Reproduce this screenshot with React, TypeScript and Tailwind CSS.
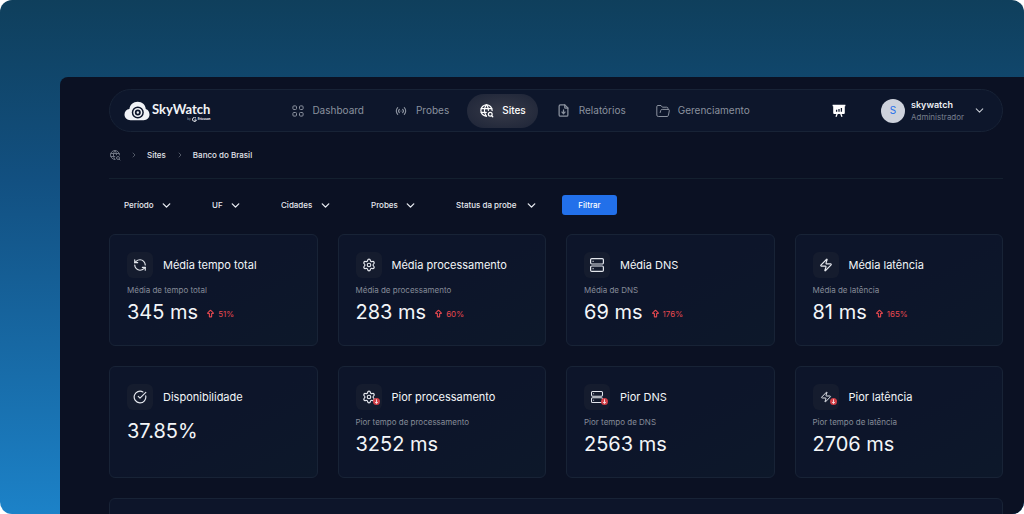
import type { ReactNode } from 'react'
import { ChevronDown, ChevronRight, CircleCheckBig, RefreshCcw, Settings, Zap } from 'lucide-react'
import { TbAccessPoint, TbArrowBigUp, TbFileDownload, TbWorldSearch } from 'react-icons/tb'

interface Metric {
  title: string
  subtitle?: string
  value: string
  change?: string
  worst?: boolean
  icon: ReactNode
}

const METRICS: Metric[] = [
  { title: 'Média tempo total', subtitle: 'Média de tempo total', value: '345 ms', change: '51%', icon: <RefreshCcw size={14} /> },
  { title: 'Média processamento', subtitle: 'Média de processamento', value: '283 ms', change: '60%', icon: <Settings size={14} /> },
  { title: 'Média DNS', subtitle: 'Média de DNS', value: '69 ms', change: '176%', icon: <ServerIcon size={14} /> },
  { title: 'Média latência', subtitle: 'Média de latência', value: '81 ms', change: '165%', icon: <Zap size={14} /> },
  { title: 'Disponibilidade', value: '37.85%', icon: <CircleCheckBig size={14} /> },
  { title: 'Pior processamento', subtitle: 'Pior tempo de processamento', value: '3252 ms', worst: true, icon: <Settings size={14} /> },
  { title: 'Pior DNS', subtitle: 'Pior tempo de DNS', value: '2563 ms', worst: true, icon: <ServerIcon size={12} /> },
  { title: 'Pior latência', subtitle: 'Pior tempo de latência', value: '2706 ms', worst: true, icon: <Zap size={12} /> },
]

const NAV = [
  { label: 'Dashboard', icon: <GridIcon /> },
  { label: 'Probes', icon: <TbAccessPoint size={14} /> },
  { label: 'Sites', icon: <TbWorldSearch size={15} />, active: true },
  { label: 'Relatórios', icon: <TbFileDownload size={15} /> },
  { label: 'Gerenciamento', icon: <FolderIcon /> },
]

const FILTERS = [
  { label: 'Período', width: 'w-[77px]' },
  { label: 'UF', width: 'w-[58px]' },
  { label: 'Cidades', width: 'w-[79px]' },
  { label: 'Probes', width: 'w-[74px]' },
  { label: 'Status da probe', width: 'w-[110px]' },
]

function ServerIcon({ size }: { size: number }) {
  return (
    <svg width={size} height={size} viewBox="0 0 14 14" fill="none" stroke="currentColor" strokeWidth="1.2">
      <rect x="0.6" y="0.6" width="12.8" height="5.4" rx="1.2" />
      <rect x="0.6" y="8" width="12.8" height="5.4" rx="1.2" />
      <path d="M2.6 3.3h1M2.6 10.7h1" />
    </svg>
  )
}

function GridIcon() {
  return (
    <svg width="12" height="12" viewBox="0 0 12 12" fill="none" stroke="currentColor">
      <rect x="0.9" y="0.9" width="3.6" height="3.6" rx="1" />
      <rect x="7.5" y="0.9" width="3.6" height="3.6" rx="1" />
      <rect x="0.9" y="7.5" width="3.6" height="3.6" rx="1" />
      <rect x="7.5" y="7.5" width="3.6" height="3.6" rx="1" />
    </svg>
  )
}

function FolderIcon() {
  return (
    <svg width="14" height="14" viewBox="0 0 14 14" fill="none" stroke="currentColor" strokeLinejoin="round" strokeLinecap="round">
      <path d="M12 5.400V4.500Q12 3.200 10.700 3.200H6.400L5 1.500H2Q.8 1.500.8 2.700V11Q.8 12.500 2.300 12.500H11Q12.100 12.500 12.400 11.400L13.300 6.700Q13.500 5.400 12.200 5.400H6.200Q5 5.400 4.700 6.500L4.200 8.500" />
    </svg>
  )
}

function PresentationIcon() {
  return (
    <svg width="14" height="14" viewBox="0 0 14 14" fill="currentColor">
      <path d="M.6.8h12.8v1.5h-.6v6.800q0 1-1 1H2.200q-1 0-1-1V2.300H.6z" />
      <path d="M5.200 9.800 4 12.800M8.800 9.800l1.200 3" stroke="currentColor" strokeWidth="1.300" />
      <path d="M4.600 5.800v2M7 4.900v2.900M9.400 4v3.800" stroke="#0e162b" strokeWidth="1.300" />
    </svg>
  )
}

function Logo() {
  return (
    <a href="#" className="flex items-center gap-[2px] text-[#f1f3f7]">
      <svg width="26" height="20" viewBox="0 0 26 20" aria-hidden="true">
        <path fill="currentColor" d="M6.500 19.200C3 19.200.5 16.800.5 13.600c0-2.900 2-5.100 4.900-5.500C6 3.800 9.200.8 13.600.8c4.600 0 7.800 2.900 8.200 7.300 2.300.9 3.700 2.900 3.700 5.500 0 3.300-2.400 5.600-5.900 5.600z" />
        <circle cx="13.800" cy="11.500" r="5.300" fill="none" stroke="#0e162b" strokeWidth="1.500" />
        <circle cx="13.800" cy="11.500" r="2.100" fill="none" stroke="#0e162b" strokeWidth="1.800" />
      </svg>
      <span className="flex flex-col items-end pt-px">
        <span className="font-['Lato'] text-[13px] leading-4 font-bold">SkyWatch</span>
        <span className="flex h-1 items-center gap-px text-[3px] leading-1 font-bold">
          <span className="font-normal opacity-60">by</span>
          <svg width="5" height="5" viewBox="0 0 5 5" fill="none" stroke="currentColor">
            <path d="M4 1.100a2 2 0 1 0 .4 1.900H2.500" />
          </svg>
          <span>Ericsson</span>
        </span>
      </span>
    </a>
  )
}

function MetricCard({ title, subtitle, value, change, worst, icon }: Metric) {
  return (
    <article className="h-28 rounded-md border border-[#182336] bg-linear-to-br from-[#0d152a] from-50% to-[#0d182a] px-[17px] pt-[17px]">
      <div className="flex items-center gap-[10px]">
        <div className="relative flex size-[26px] items-center justify-center rounded-md bg-[#151c2e] text-[#e3e6ec]">
          {icon}
          {worst && (
            <svg className="absolute right-[2px] bottom-[5px]" width="7" height="7" viewBox="0 0 7 7">
              <circle cx="3.500" cy="3.500" r="3.500" fill="#d33e46" />
              <path d="M3.500 1.300v4M2 3.900l1.500 1.500L5 3.900" fill="none" stroke="#fff" strokeWidth="0.800" />
            </svg>
          )}
        </div>
        <h2 className="text-[11px] leading-4 text-[#f3f5f8]">{title}</h2>
      </div>
      {subtitle && <p className="mt-[6px] text-[8px] leading-3 text-[#858b98]">{subtitle}</p>}
      <div className={subtitle ? 'flex items-center gap-2' : 'mt-[5px] flex items-center gap-2'}>
        <span className="text-[20px] leading-8 text-[#f3f5f8]">{value}</span>
        {change && (
          <span className="flex items-center gap-[3px] pt-[3px] text-[8px] text-[#e5484f]">
            <TbArrowBigUp size={9} strokeWidth={3} />
            {change}
          </span>
        )}
      </div>
    </article>
  )
}

export default function App() {
  return (
    <div className="min-h-screen bg-white font-['Inter',sans-serif]">
      <div className="h-screen overflow-hidden rounded-xl bg-linear-to-b from-[#0f3f5c] via-[#125081] via-35% to-[#1c82c8] pt-[77px] pl-[60px]">
        <div className="h-full rounded-tl-lg bg-[#0b1123] pt-3 pr-[21px] pl-[49px]">
          <header className="flex h-[43px] items-center rounded-full border border-[#182336] bg-[#0d162b] pr-4 pl-[14px]">
            <Logo />
            <nav className="ml-[70px] flex items-center gap-[6px]">
              {NAV.map(item => (
                <a
                  key={item.label}
                  href="#"
                  className={
                    item.active
                      ? 'flex h-[34px] items-center gap-2 rounded-full bg-radial from-[#373a48] to-[#1d2437] px-3 text-[10px] font-medium text-white'
                      : 'flex h-[34px] items-center gap-2 px-3 text-[10px] text-[#8a919e]'
                  }
                >
                  {item.icon}
                  {item.label}
                </a>
              ))}
            </nav>
            <div className="ml-auto flex items-center">
              <button type="button" aria-label="Apresentação" className="mr-[35px] text-white">
                <PresentationIcon />
              </button>
              <button type="button" className="flex items-center text-left">
                <span className="flex size-6 items-center justify-center rounded-full bg-[#ced2dc] text-[10px] text-[#2570eb]">S</span>
                <span className="ml-[6px] flex w-14 flex-col">
                  <span className="text-[9px] leading-[13px] font-semibold text-[#edf0f5]">skywatch</span>
                  <span className="text-[8px] leading-[13px] text-[#777e8d]">Administrador</span>
                </span>
                <ChevronDown size={13} className="ml-[6px] text-[#c3c8d1]" />
              </button>
            </div>
          </header>

          <nav aria-label="Breadcrumb" className="flex h-[47px] items-center border-b border-[#14202f] text-[8px] font-medium text-[#e2e5eb]">
            <TbWorldSearch size={12} className="text-[#6d7482]" />
            <ChevronRight size={8} className="mx-[9px] text-[#747b88]" />
            <a href="#">Sites</a>
            <ChevronRight size={8} className="mr-[9px] ml-[10px] text-[#747b88]" />
            <a href="#">Banco do Brasil</a>
          </nav>

          <form className="mt-4 flex h-5 items-center gap-[11px]">
            {FILTERS.map(filter => (
              <div key={filter.label} className={`${filter.width} flex items-center justify-between px-[15px]`}>
                <select aria-label={filter.label} className="appearance-none bg-transparent text-[8px] font-medium text-[#e7eaf0]">
                  <option>{filter.label}</option>
                </select>
                <ChevronDown size={13} strokeWidth={2.5} className="-mr-[2px] shrink-0 text-[#e7eaf0]" />
              </div>
            ))}
            <button type="button" className="h-5 w-[55px] rounded-[3px] bg-[#2270ea] text-[8px] font-medium text-white">Filtrar</button>
          </form>

          <main className="mt-[19px] grid grid-cols-4 gap-5">
            {METRICS.map(metric => <MetricCard key={metric.title} {...metric} />)}
            <section className="col-span-4 h-28 rounded-md border border-[#182336] bg-[#0d152a]" />
          </main>
        </div>
      </div>
    </div>
  )
}
